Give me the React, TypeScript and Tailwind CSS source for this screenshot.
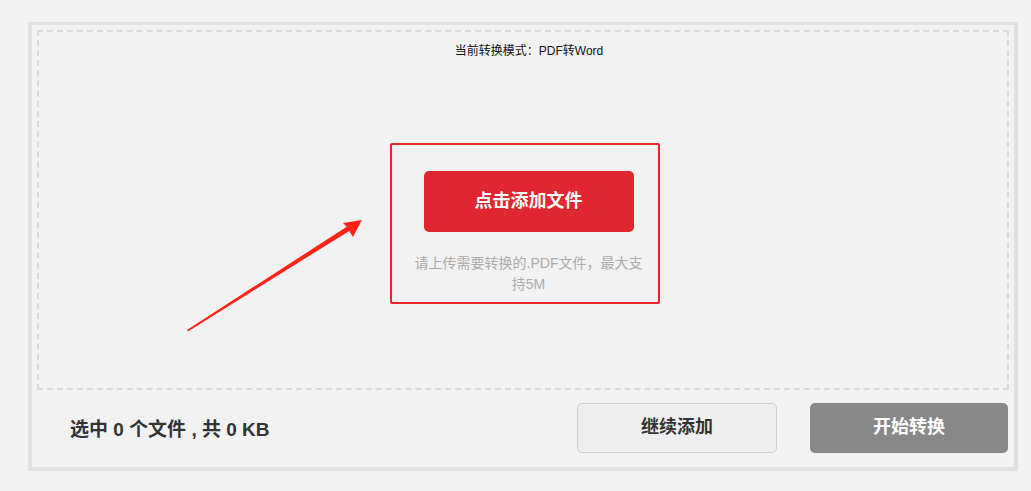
import React from "react";

export default function App() {
  return (
    <div
      className="relative h-[491px] w-[1031px] bg-[#f2f2f2] pt-[22px] pl-[28px]"
      style={{ fontFamily: '"Liberation Sans", "Noto Sans CJK SC", sans-serif' }}
    >
      <div className="flex h-[449px] w-[990px] flex-col border-4 border-t-[3px] border-[#e0e0e0] bg-[#f2f2f2] px-[5px] pt-[5px]">
        <div className="flex h-[360px] flex-col items-center border-2 border-dashed border-[#dadada] pt-[11px]">
          <div className="ml-[12px] text-[12px] leading-[16px] text-[#111]">当前转换模式：PDF转Word</div>
          <div className="ml-[3px] mt-[84px] flex h-[161px] w-[270px] flex-col items-start rounded-[2px] border-2 border-[#e8262a] pt-[26px]">
            <button className="ml-[32px] flex h-[61px] w-[210px] items-center justify-center rounded-[5px] bg-[#e0262e] text-[18px] font-bold text-white">
              点击添加文件
            </button>
            <p className="ml-[19px] mt-[21px] w-[236px] text-center text-[14px] leading-[21px] text-[#ababab]">
              请上传需要转换的.PDF文件，最大支持5M
            </p>
          </div>
        </div>
        <div className="flex flex-1 items-center pb-[2px]">
          <div className="ml-[33px] mt-[6px] text-[19px] font-bold text-[#333]">选中 0 个文件 , 共 0 KB</div>
          <button className="ml-auto flex h-[50px] w-[200px] items-center justify-center rounded-[5px] border border-[#cfcfcf] bg-[#eeeeee] text-[18px] font-bold text-[#333]">
            继续添加
          </button>
          <button className="ml-[33px] mr-[1px] flex h-[50px] w-[198px] items-center justify-center rounded-[5px] bg-[#888888] text-[18px] font-bold text-white">
            开始转换
          </button>
        </div>
      </div>
      <svg className="absolute left-[180px] top-[212px]" width="190" height="125" viewBox="0 0 190 125">
        <polygon
          points="7,118 166.7,14.7 163,11 182,8 173,25 169.3,18.9 8,119.5"
          fill="#ff2318"
        />
      </svg>
    </div>
  );
}
